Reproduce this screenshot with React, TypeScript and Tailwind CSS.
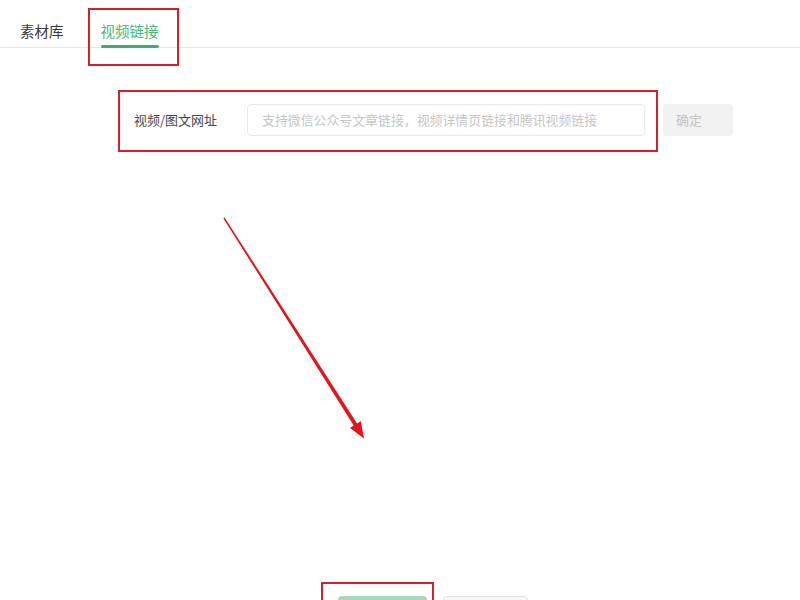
import React from 'react'

const font = "font-['Noto_Sans_CJK_SC','Noto_Sans',sans-serif]"

export default function App() {
  return (
    <div className={`relative h-[600px] w-[800px] overflow-hidden bg-white ${font}`}>
      {/* tabs */}
      <header className="flex h-[48px] items-start gap-[37px] border-b border-[#e6e6e6] pl-[20px]">
        <div className="flex flex-col pt-[19px]">
          <span className="text-[14.5px] leading-6 text-[#3a3a3a]">素材库</span>
        </div>
        <div className="flex flex-col pt-[19px]">
          <span className="text-[14.5px] leading-6 text-[#46ba76]">视频链接</span>
          <div className="mt-[2px] h-[3px] rounded-full bg-[#3fae6d]" />
        </div>
      </header>

      {/* url form */}
      <div className="mt-[56px] flex items-center pl-[134px]">
        <label className="w-[113px] text-[13px] text-[#474747]">视频/图文网址</label>
        <div className="flex h-[32px] w-[398px] items-center rounded-sm border border-[#e8e8e8] bg-white pl-[14px]">
          <span className="whitespace-nowrap text-[12.9px] text-[#c6c6c6]">
            支持微信公众号文章链接，视频详情页链接和腾讯视频链接
          </span>
        </div>
        <button className="ml-[18px] h-[32px] w-[70px] rounded-sm bg-[#f2f2f2] pl-[13px] text-left text-[13px] text-[#c4c4c4]">
          确定
        </button>
      </div>

      {/* footer buttons */}
      <div className="mt-[460px] flex gap-[16px] pl-[338px]">
        <button className="h-[36px] w-[89px] rounded-sm bg-[#a6dab5]" />
        <button className="h-[36px] w-[85px] rounded-sm border border-[#e2e2e2] bg-[#f7f7f7]" />
      </div>

      {/* annotations */}
      <div className="pointer-events-none absolute left-[88px] top-[8px] h-[58px] w-[91px] border-2 border-[#d4202b]" />
      <div className="pointer-events-none absolute left-[118px] top-[90px] h-[62px] w-[540px] border-2 border-[#d4202b]" />
      <div className="pointer-events-none absolute left-[321px] top-[582px] h-[40px] w-[113px] border-2 border-[#d4202b]" />
      <svg className="pointer-events-none absolute left-0 top-0" width="800" height="600" viewBox="0 0 800 600">
        <polygon
          points="224.6,217.6 357.1,423.4 360.8,421.1 364,438.5 350,427.9 353.7,425.6 223.4,218.4"
          fill="#e3141c"
        />
      </svg>
    </div>
  )
}
